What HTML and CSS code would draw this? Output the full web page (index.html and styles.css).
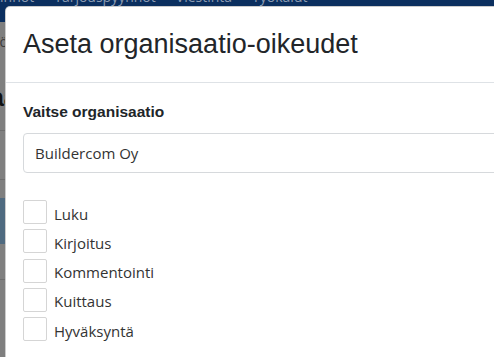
FILE: index.html
```html
<!DOCTYPE html>
<html lang="fi">
<head>
<meta charset="utf-8">
<title>Aseta organisaatio-oikeudet</title>
<link rel="stylesheet" href="styles.css">
</head>
<body>
<div class="page">
  <nav class="topnav">
    <div class="nav-links">
      <a class="nav-link">Hankinnot</a>
      <a class="nav-link">Tarjouspyynnöt</a>
      <a class="nav-link">Viestintä</a>
      <a class="nav-link">Työkalut</a>
    </div>
  </nav>
  <main class="page-main">
    <div class="crumb">Työmaarö</div>
    <h1 class="page-title">Työmaa</h1>
    <div class="rule rule-1"></div>
    <div class="rule rule-2"></div>
    <div class="tab-active"></div>
    <div class="rule rule-3"></div>
  </main>
</div>

<div class="modal" role="dialog" aria-labelledby="modal-title">
  <div class="modal-header">
    <h5 class="modal-title" id="modal-title">Aseta organisaatio-oikeudet</h5>
  </div>
  <div class="modal-body">
    <label class="field-label" for="org">Vaitse organisaatio</label>
    <div class="select" id="org">Buildercom Oy</div>
    <ul class="perm-list">
      <li class="perm"><span class="check"></span><span class="perm-label">Luku</span></li>
      <li class="perm"><span class="check"></span><span class="perm-label">Kirjoitus</span></li>
      <li class="perm"><span class="check"></span><span class="perm-label">Kommentointi</span></li>
      <li class="perm"><span class="check"></span><span class="perm-label">Kuittaus</span></li>
      <li class="perm"><span class="check"></span><span class="perm-label">Hyväksyntä</span></li>
    </ul>
  </div>
</div>
</body>
</html>
```

FILE: styles.css
```css
html, body {
  margin: 0;
  padding: 0;
}

body {
  width: 494px;
  height: 357px;
  overflow: hidden;
  position: relative;
  background: #7f7f7f;
  font-family: "Open Sans", "Liberation Sans", sans-serif;
}

/* ---------- background page (already dimmed by the backdrop) ---------- */
.page {
  display: flex;
  flex-direction: column;
}

.topnav {
  height: 38px;
  margin-top: -16px;
  background: #0b2f5f;
  box-sizing: border-box;
  padding-top: 3px;
}

.nav-links {
  display: flex;
  gap: 20px;
  margin-left: -34px;
}

.nav-link {
  font-size: 14px;
  line-height: 20px;
  color: #8c9bb1;
  white-space: nowrap;
}

.page-main {
  display: flex;
  flex-direction: column;
}

.crumb {
  margin-top: 10px;
  font-size: 14px;
  line-height: 20px;
  color: #3b3b3b;
  text-indent: -58px;
  white-space: nowrap;
}

.page-title {
  margin: 30px 0 0;
  font-family: "Liberation Sans", sans-serif;
  font-size: 26px;
  line-height: 30px;
  font-weight: bold;
  color: #111;
  text-indent: -78px;
  white-space: nowrap;
}

.rule {
  height: 1px;
  background: #6d6d6d;
}

.rule-1 { margin-top: 18px; }
.rule-2 { margin-top: 48px; }

.tab-active {
  margin-top: 18px;
  height: 46px;
  background: #4f6a80;
}

.rule-3 { margin-top: 35px; }

/* ---------- modal ---------- */
.modal {
  position: absolute;
  left: 5px;
  top: 6px;
  width: 560px;
  height: 420px;
  background: #fff;
  border: 1px solid rgba(0, 0, 0, 0.2);
  border-radius: 5px;
  box-sizing: border-box;
  display: flex;
  flex-direction: column;
}

.modal-header {
  padding: 21px 17px 22px;
  border-bottom: 1px solid #dee2e6;
}

.modal-title {
  margin: 0;
  font-family: "Liberation Sans", Arial, sans-serif;
  font-size: 27px;
  line-height: 32px;
  font-weight: normal;
  color: #222529;
  white-space: nowrap;
}

.modal-body {
  padding: 19px 17px 0;
  display: flex;
  flex-direction: column;
}

.field-label {
  font-family: "Liberation Sans", Arial, sans-serif;
  font-size: 15.5px;
  line-height: 20px;
  font-weight: bold;
  color: #212529;
}

.select {
  margin-top: 11px;
  height: 40px;
  box-sizing: border-box;
  border: 1px solid #d6d9dc;
  border-radius: 4px;
  padding: 0 11px;
  display: flex;
  align-items: center;
  font-size: 15px;
  color: #333;
}

.perm-list {
  list-style: none;
  margin: 27px 0 0;
  padding: 0;
  display: flex;
  flex-direction: column;
  gap: 5.25px;
}

.perm {
  display: flex;
  align-items: center;
  gap: 7px;
  height: 24px;
}

.check {
  width: 24px;
  height: 24px;
  box-sizing: border-box;
  border: 1px solid #d5d5d5;
  border-radius: 2px;
  background: #fff;
  flex: none;
}

.perm-label {
  font-size: 15px;
  line-height: 20px;
  color: #333;
  padding-top: 3px;
}
```
